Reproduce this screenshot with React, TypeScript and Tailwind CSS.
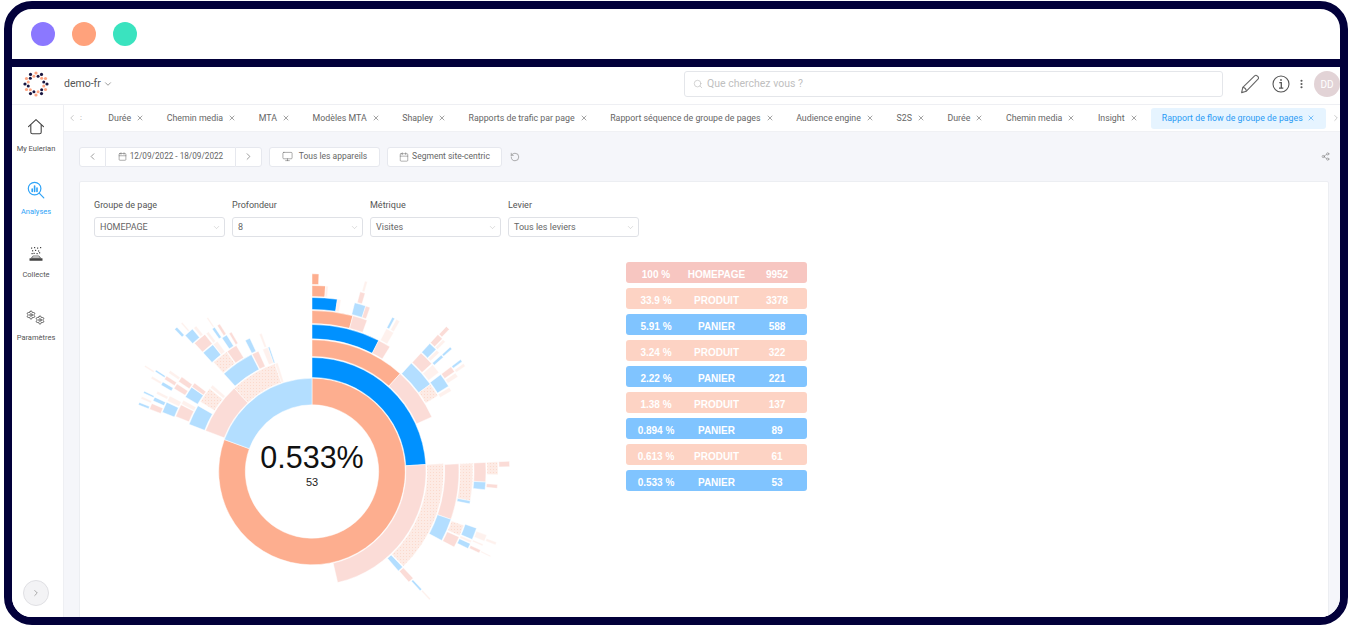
import { Calendar, ChevronDown, ChevronLeft, ChevronRight, MoreVertical, Monitor, RotateCcw, Search, Settings, Share2, X } from 'lucide-react';

const O = '#fdae8f';
const F = '#0091ff';
const B = '#b3deff';
const D = '#fbdcd7';
const P = 'url(#dots)';
const V = '#fef1ed';

const RADII = [
    [66.7, 93.3],
    [94, 114],
    [115, 131.7],
    [132.7, 147],
    [148, 161],
    [162, 174],
    [175, 186],
    [187, 197.7],
];

// ring, start angle, end angle (degrees, clockwise from the top), fill
const ARCS: [number, number, number, string][] = [
    [0, 0, 290, O], [0, 290, 360, B],
    [1, 0, 86.5, F], [1, 86.5, 167, D], [1, 291, 317, D], [1, 317, 341, P], [1, 341, 342.5, V],
    // top branch
    [2, 0, 42, O], [2, 42, 65.5, D],
    [3, 0, 27, F], [3, 27, 32, D], [3, 42.5, 53.6, B], [3, 53.6, 59, P],
    [4, 0, 14.7, O], [4, 14.7, 20, D], [4, 27.5, 30.5, V], [4, 42.6, 48, D], [4, 48.5, 52, V], [4, 53, 58, B], [4, 58.5, 60, V],
    [5, 0, 8.4, F], [5, 8.4, 9.6, V], [5, 14.2, 18, B], [5, 18, 19.5, D], [5, 27.5, 28.4, B], [5, 29, 30.3, V], [5, 42.6, 45.5, B], [5, 45.8, 47, V], [5, 48, 49, B], [5, 53, 55, D], [5, 55.5, 57, V],
    [6, 0, 4.2, O], [6, 4.2, 5, V], [6, 15, 16.6, D], [6, 42.6, 44.5, D], [6, 44.8, 45.8, V], [6, 48, 48.8, B], [6, 53, 53.8, B], [6, 54.5, 55.5, V],
    [7, 0, 2, O], [7, 15.5, 16.3, V], [7, 42.8, 44, D],
    // right branch
    [2, 86.5, 136, P], [2, 136.5, 139, B],
    [3, 87, 109, D], [3, 109, 118, B], [3, 136.5, 138.8, D],
    [4, 87, 100.5, P], [4, 100.5, 101.6, B], [4, 109.5, 113.5, P], [4, 114, 118, D], [4, 137, 137.8, B],
    [5, 87, 93.5, D], [5, 93.5, 96, B], [5, 109, 113, B], [5, 113.4, 114.2, V], [5, 114.5, 116.3, B], [5, 137, 137.6, V],
    [6, 87, 91, P], [6, 94, 95.2, D], [6, 110, 112, V], [6, 113, 113.6, V], [6, 115, 116, D],
    [7, 87, 88.6, D], [7, 111, 111.8, V], [7, 115.2, 115.6, V],
    // left branch
    [2, 291, 300, B], [2, 302, 309, P], [2, 309.5, 311, V], [2, 318, 332.6, B], [2, 333, 336, D], [2, 338, 340.5, V], [2, 340.5, 341.2, B],
    [3, 292, 297, D], [3, 297.3, 299, V], [3, 300.5, 305, B], [3, 305.2, 307, D], [3, 318, 324.5, P], [3, 324.8, 329, D], [3, 333, 335, B], [3, 339, 340, V],
    [4, 291.6, 295.5, B], [4, 296, 298, V], [4, 301, 303, D], [4, 304, 306, D], [4, 317.5, 322, B], [4, 322.2, 324, V], [4, 326, 328, B], [4, 329, 330, D],
    [5, 291, 293, D], [5, 294, 295.3, B], [5, 296.5, 297.5, V], [5, 299.8, 301, B], [5, 302, 303.3, D], [5, 304.5, 305.5, V], [5, 317.5, 322, D], [5, 322.5, 323.5, V], [5, 325, 326, B], [5, 327, 328, D],
    [6, 291, 291.8, B], [6, 293, 293.8, V], [6, 295, 295.6, B], [6, 300, 300.8, V], [6, 302.5, 303.1, B], [6, 317, 320, B], [6, 320.5, 321.5, V], [6, 325.5, 326, V],
    [7, 302, 302.5, V], [7, 316, 316.9, B], [7, 318.5, 319, V],
];

const CX = 218;
const CY = 221.5;

function arcPath(ring: number, a0: number, a1: number) {
    const [r0, r1] = RADII[ring];
    const pt = (r: number, a: number) => {
        const rad = (a * Math.PI) / 180;
        return `${(CX + r * Math.sin(rad)).toFixed(2)} ${(CY - r * Math.cos(rad)).toFixed(2)}`;
    };
    const big = a1 - a0 > 180 ? 1 : 0;
    return `M${pt(r0, a0)} L${pt(r1, a0)} A${r1} ${r1} 0 ${big} 1 ${pt(r1, a1)} L${pt(r0, a1)} A${r0} ${r0} 0 ${big} 0 ${pt(r0, a0)} Z`;
}

const TABS = [
    'Durée', 'Chemin media', 'MTA', 'Modèles MTA', 'Shapley', 'Rapports de trafic par page',
    'Rapport séquence de groupe de pages', 'Audience engine', 'S2S', 'Durée', 'Chemin media', 'Insight',
];

const FILTERS = [
    { label: 'Groupe de page', value: 'HOMEPAGE' },
    { label: 'Profondeur', value: '8' },
    { label: 'Métrique', value: 'Visites' },
    { label: 'Levier', value: 'Tous les leviers' },
];

const ROWS = [
    { pct: '100 %', name: 'HOMEPAGE', count: '9952', color: 'bg-[#f7c6c1]' },
    { pct: '33.9 %', name: 'PRODUIT', count: '3378', color: 'bg-[#fdd3c4]' },
    { pct: '5.91 %', name: 'PANIER', count: '588', color: 'bg-[#80c4ff]' },
    { pct: '3.24 %', name: 'PRODUIT', count: '322', color: 'bg-[#fdd3c4]' },
    { pct: '2.22 %', name: 'PANIER', count: '221', color: 'bg-[#80c4ff]' },
    { pct: '1.38 %', name: 'PRODUIT', count: '137', color: 'bg-[#fdd3c4]' },
    { pct: '0.894 %', name: 'PANIER', count: '89', color: 'bg-[#80c4ff]' },
    { pct: '0.613 %', name: 'PRODUIT', count: '61', color: 'bg-[#fdd3c4]' },
    { pct: '0.533 %', name: 'PANIER', count: '53', color: 'bg-[#80c4ff]' },
];

function Logo() {
    const dots = [];
    for (let i = 0; i < 12; i++) {
        const a = (i * 30 * Math.PI) / 180;
        dots.push(<circle key={`o${i}`} cx={13 + 11 * Math.sin(a)} cy={13 - 11 * Math.cos(a)} r={1.6} fill={i % 2 ? '#1a1640' : '#fda583'} />);
        const b = ((i * 30 + 15) * Math.PI) / 180;
        dots.push(<circle key={`i${i}`} cx={13 + 8 * Math.sin(b)} cy={13 - 8 * Math.cos(b)} r={1.5} fill={i % 2 ? '#fda583' : '#1a1640'} />);
    }
    return <svg width="26" height="26" viewBox="0 0 26 26">{dots}</svg>;
}

function HomeIcon() {
    return (
        <svg width="18" height="18" viewBox="0 0 18 18" fill="none" stroke="#444" strokeWidth="1.1" strokeLinejoin="round" strokeLinecap="round">
            <path d="M1.5 8.6 9 1.6l7.5 7" />
            <path d="M3.8 7v7.2c0 1 .6 1.6 1.6 1.6h7.2c1 0 1.6-.6 1.6-1.6V7" />
        </svg>
    );
}

function AnalysesIcon() {
    return (
        <svg width="18" height="18" viewBox="0 0 18 18" fill="none" stroke="#2ea3f7" strokeWidth="1.2" strokeLinecap="round">
            <circle cx="7.6" cy="7.6" r="6.3" />
            <path d="m12.2 12.2 4.6 4.6" />
            <path d="M5.2 10.4V8M7.6 10.4V5M10 10.4V7" strokeWidth="1.6" />
        </svg>
    );
}

function CollecteIcon() {
    return (
        <svg width="16" height="16" viewBox="0 0 16 16" fill="#444">
            <rect x="1.5" y="12.2" width="13" height="2.6" rx="0.4" />
            <path d="M3.5 12 5 10h6l1.5 2z" fill="none" stroke="#444" strokeWidth="0.7" />
            {[[3, 1.5], [6, 1], [9, 1.5], [12, 1], [4, 4.2], [7, 3.8], [10, 4.4], [5.5, 6.8], [8.5, 7], [11, 6.2], [3.5, 7]].map(([x, y], i) => (
                <rect key={i} x={x} y={y} width="1.2" height="1.2" />
            ))}
        </svg>
    );
}

function PencilIcon() {
    return (
        <svg width="20" height="20" viewBox="0 0 20 20" fill="none" stroke="#666" strokeWidth="1.1" strokeLinejoin="round">
            <path d="M1.6 18.6 2.8 13.4 14.6 1.8c.8-.7 1.8-.7 2.5 0l.9.9c.7.7.7 1.7 0 2.4L6.4 17.2z" />
            <path d="M2.8 13.4c1.6.2 3.3 1.9 3.6 3.8" />
        </svg>
    );
}

function InfoIcon() {
    return (
        <svg width="18" height="18" viewBox="0 0 18 18" fill="none" stroke="#555" strokeWidth="1.1">
            <circle cx="9" cy="9" r="8" />
            <circle cx="9" cy="5" r="0.9" fill="#555" stroke="none" />
            <path d="M7.3 7.7H9.3V13M7 13.1H11.3" strokeWidth="1.3" />
        </svg>
    );
}

function NavItem({ icon, label, active }: { icon: React.ReactNode; label: string; active?: boolean }) {
    return (
        <div className="h-[63px] flex flex-col items-center">
            <div className="h-[28px] flex items-end justify-center">{icon}</div>
            <span className={`mt-[7px] text-[7.5px] leading-[11px] whitespace-nowrap ${active ? 'text-[#2ea3f7]' : 'text-[#555]'}`}>{label}</span>
        </div>
    );
}

function ToolbarButton({ children, className = '' }: { children: React.ReactNode; className?: string }) {
    return (
        <div className={`h-[20px] flex items-center justify-center bg-white border border-[#e6e8ee] rounded-[3px] text-[8.5px] text-[#666] ${className}`}>
            {children}
        </div>
    );
}

export default function App() {
    return (
        <div className="h-[626px] w-full bg-white pl-[4px] pr-[2px] py-[1px] overflow-hidden" style={{ fontFamily: 'Roboto, "Liberation Sans", sans-serif' }}>
            <div className="h-full border-[8px] border-[#02003a] rounded-[28px] overflow-hidden flex flex-col bg-white">
                {/* window title bar */}
                <div className="h-[58px] shrink-0 border-b-[8px] border-[#02003a] flex items-center pl-[19px] gap-[17px]">
                    <div className="w-[24px] h-[24px] rounded-full bg-[#8b78ff]" />
                    <div className="w-[24px] h-[24px] rounded-full bg-[#ffa27c]" />
                    <div className="w-[24px] h-[24px] rounded-full bg-[#3ae3bf]" />
                </div>

                {/* app header */}
                <div className="h-[38px] shrink-0 flex items-center pb-[3px] border-b border-[#eeeff3]">
                    <div className="ml-[11px] w-[26px] h-[26px]"><Logo /></div>
                    <span className="ml-[15px] text-[10.5px] text-[#555]">demo-fr</span>
                    <ChevronDown className="w-[10px] h-[10px] ml-[2px] text-[#555]" strokeWidth={1.4} />
                    <div className="ml-auto w-[539px] h-[26px] mr-[10px] border border-[#e4e6ea] rounded-[3px] flex items-center pl-[8px] gap-[4px]">
                        <Search className="w-[10px] h-[10px] text-[#bbb]" strokeWidth={1.5} />
                        <span className="text-[10.5px] text-[#c0c0c0]">Que cherchez vous ?</span>
                    </div>
                    <div className="flex items-center w-[107px] shrink-0 pl-[6px]">
                        <div className="ml-[1px]"><PencilIcon /></div>
                        <div className="ml-[12px]"><InfoIcon /></div>
                        <MoreVertical className="w-[14px] h-[14px] ml-[6px] text-[#555]" strokeWidth={2.6} />
                        <div className="ml-[7px] w-[26px] h-[26px] shrink-0 rounded-full bg-[#e2d3d6] flex items-center justify-center text-[10px] text-white">DD</div>
                    </div>
                </div>

                <div className="flex-1 min-h-0 flex">
                    {/* left navigation */}
                    <div className="w-[52px] shrink-0 border-r border-[#eeeff3] bg-white flex flex-col items-center pt-[3px] pr-[3px]">
                        <NavItem icon={<HomeIcon />} label="My Eulerian" />
                        <NavItem active icon={<AnalysesIcon />} label="Analyses" />
                        <NavItem icon={<CollecteIcon />} label="Collecte" />
                        <NavItem
                            label="Paramètres"
                            icon={
                                <div className="flex items-start">
                                    <Settings className="w-[10px] h-[10px] text-[#444]" strokeWidth={2} />
                                    <Settings className="w-[10px] h-[10px] text-[#444] mt-[5px] -ml-[1px]" strokeWidth={2} />
                                </div>
                            }
                        />
                        <div className="mt-auto mb-[11px] w-[26px] h-[26px] rounded-full bg-[#f3f3f5] border border-[#dfdfe3] flex items-center justify-center">
                            <ChevronRight className="w-[10px] h-[10px] text-[#999]" strokeWidth={2} />
                        </div>
                    </div>

                    <div className="flex-1 min-w-0 flex flex-col bg-[#f5f6fa]">
                        {/* tab bar */}
                        <div className="h-[27px] shrink-0 bg-white flex items-center border-b border-[#f0f1f4] text-[8.8px] text-[#666] whitespace-nowrap overflow-hidden">
                            <ChevronLeft className="w-[10px] h-[10px] ml-[3px] shrink-0 text-[#aaa]" strokeWidth={1.5} />
                            <span className="ml-[3px] w-[17px] shrink-0 text-[8px] text-[#999]">:</span>
                            {TABS.map((t, i) => (
                                <div key={i} className="shrink-0 px-[11.3px] flex items-center gap-[5px]">
                                    <span className="pt-[1px]">{t}</span>
                                    <X className="w-[8px] h-[8px] text-[#666]" strokeWidth={1.8} />
                                </div>
                            ))}
                            <div className="shrink-0 ml-[2px] h-[21px] px-[11px] bg-[#e6f4ff] rounded-[3px] flex items-center gap-[4px] text-[#2a9bf5]">
                                <span className="pt-[1px]">Rapport de flow de groupe de pages</span>
                                <X className="w-[8px] h-[8px]" strokeWidth={1.8} />
                            </div>
                            <ChevronRight className="w-[10px] h-[10px] ml-[5px] shrink-0 text-[#aaa]" strokeWidth={1.5} />
                        </div>

                        <div className="flex-1 min-h-0 overflow-hidden pl-[15px] pr-[11px]">
                            {/* toolbar */}
                            <div className="h-[49px] flex items-center gap-[7px]">
                                <div className="flex items-center">
                                    <ToolbarButton className="w-[27px] rounded-r-none">
                                        <ChevronLeft className="w-[11px] h-[11px]" strokeWidth={1.4} />
                                    </ToolbarButton>
                                    <ToolbarButton className="w-[129px] rounded-none border-l-0 border-r-0 gap-[3px]">
                                        <Calendar className="w-[9px] h-[9px]" strokeWidth={1.4} />
                                        <span className="text-[8.2px]">12/09/2022 - 18/09/2022</span>
                                    </ToolbarButton>
                                    <ToolbarButton className="w-[27px] rounded-l-none">
                                        <ChevronRight className="w-[11px] h-[11px]" strokeWidth={1.4} />
                                    </ToolbarButton>
                                </div>
                                <ToolbarButton className="w-[111px] gap-[6px]">
                                    <Monitor className="w-[11px] h-[11px]" strokeWidth={1.2} />
                                    <span>Tous les appareils</span>
                                </ToolbarButton>
                                <ToolbarButton className="w-[115px] gap-[3px]">
                                    <Calendar className="w-[10px] h-[10px]" strokeWidth={1.2} />
                                    <span>Segment site-centric</span>
                                </ToolbarButton>
                                <RotateCcw className="ml-[1px] w-[10px] h-[10px] text-[#777]" strokeWidth={1.4} />
                                <Share2 className="ml-auto mr-[-1px] w-[9px] h-[9px] text-[#777]" strokeWidth={1.4} />
                            </div>

                            {/* report card */}
                            <div className="h-[460px] bg-white border border-[#eceef2] rounded-[2px] pl-[14px] pt-[16px]">
                                <div className="flex gap-[7px]">
                                    {FILTERS.map((f) => (
                                        <div key={f.label} className="w-[131px]">
                                            <div className="h-[13px] pt-[1px] text-[9px] leading-[13px] text-[#555]">{f.label}</div>
                                            <div className="mt-[6px] h-[20px] pt-[1px] border border-[#dfe1e6] rounded-[3px] flex items-center justify-between pl-[5px] pr-[3px] text-[9px] text-[#666]">
                                                <span>{f.value}</span>
                                                <ChevronDown className="w-[9px] h-[9px] text-[#bbb]" strokeWidth={1.3} />
                                            </div>
                                        </div>
                                    ))}
                                </div>

                                <div className="mt-[13px] flex items-start">
                                    <svg width="532" height="360" viewBox="0 0 532 360" className="shrink-0" style={{ fontFamily: '"Liberation Sans", sans-serif' }}>
                                        <defs>
                                            <pattern id="dots" width="3" height="3" patternUnits="userSpaceOnUse">
                                                <rect width="3" height="3" fill="#fdebe5" />
                                                <rect width="1" height="1" fill="#fbdacd" />
                                            </pattern>
                                        </defs>
                                        {ARCS.map(([ring, a0, a1, fill], i) => (
                                            <path key={i} d={arcPath(ring, a0, a1)} fill={fill} stroke="#fff" strokeWidth="0.5" />
                                        ))}
                                        <text x={CX} y={218} textAnchor="middle" fontSize="30.5" fill="#111">0.533%</text>
                                        <text x={CX} y={236} textAnchor="middle" fontSize="11" fill="#222">53</text>
                                    </svg>
                                    <div className="mt-[12px] flex flex-col gap-[5px]" style={{ fontFamily: '"Liberation Sans", sans-serif' }}>
                                        {ROWS.map((r, i) => (
                                            <div key={i} className={`w-[181px] h-[21px] pt-[3px] rounded-[3px] grid grid-cols-[60px_61px_60px] items-center text-center text-[10px] font-bold text-white ${r.color}`}>
                                                <span>{r.pct}</span>
                                                <span>{r.name}</span>
                                                <span>{r.count}</span>
                                            </div>
                                        ))}
                                    </div>
                                </div>
                            </div>
                        </div>
                    </div>
                </div>
            </div>
        </div>
    );
}
